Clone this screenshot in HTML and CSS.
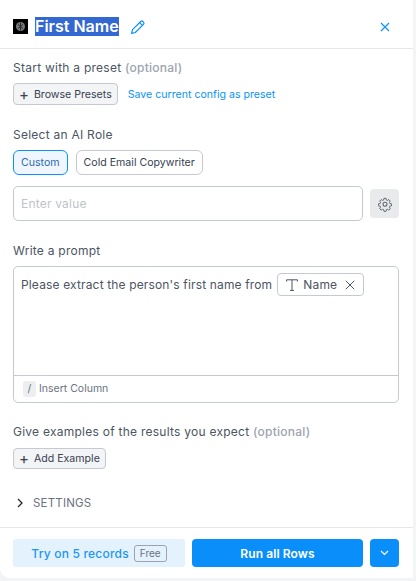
FILE: index.html
```html
<!DOCTYPE html>
<html>
<head>
<meta charset="utf-8">
<title>First Name</title>
<link rel="stylesheet" href="styles.css">
</head>
<body>
<div class="panel">
  <div class="header">
    <svg class="logo" width="15" height="15" viewBox="0 0 15 15"><rect width="15" height="15" fill="#000"/><circle cx="7.5" cy="7.5" r="4.5" fill="#77797c"/><path d="M5 5.5l5 4M5 9.5l5-4M7.5 3.5v8" stroke="#2a2a2a" stroke-width="1"/></svg>
    <span class="title">First Name</span>
    <svg class="pencil" width="16" height="16" viewBox="0 0 16 16" fill="none" stroke="#0b93f6" stroke-width="1.2" stroke-linejoin="round"><path d="M1.6 14.4l.9-3.7 8.2-8.2a1.5 1.5 0 0 1 2.1 0l.7.7a1.5 1.5 0 0 1 0 2.1l-8.2 8.2z"/><path d="M9.6 3.6l2.8 2.8"/></svg>
    <svg class="close" width="10" height="10" viewBox="0 0 10 10" fill="none" stroke="#0b93f6" stroke-width="1.2"><path d="M1 1l8 8M9 1l-8 8"/></svg>
  </div>

  <div class="body">
    <div class="label">Start with a preset <span class="muted">(optional)</span></div>
    <div class="row preset-row">
      <button class="btn"><span class="plus">+</span>Browse Presets</button>
      <a class="link">Save current config as preset</a>
    </div>

    <div class="label role-label">Select an AI Role</div>
    <div class="row role-row">
      <span class="chip chip-on">Custom</span>
      <span class="chip">Cold Email Copywriter</span>
    </div>
    <div class="row value-row">
      <div class="input">Enter value</div>
      <div class="gear">
        <svg width="16" height="16" viewBox="0 0 24 24" fill="none" stroke="#5f6470" stroke-width="1.6" stroke-linejoin="round"><path d="M10.3 2.6h3.4l.6 2.8 1.7.7 2.4-1.5 2.4 2.4-1.5 2.4.7 1.7 2.8.6v3.4l-2.8.6-.7 1.7 1.5 2.4-2.4 2.4-2.4-1.5-1.7.7-.6 2.8h-3.4l-.6-2.8-1.7-.7-2.4 1.5-2.4-2.4 1.5-2.4-.7-1.7-2.8-.6v-3.4l2.8-.6.7-1.7-1.5-2.4 2.4-2.4 2.4 1.5 1.7-.7z" transform="translate(1.2 1.2) scale(.9)"/><circle cx="12" cy="12.5" r="3"/></svg>
      </div>
    </div>

    <div class="label prompt-label">Write a prompt</div>
    <div class="prompt">
      <div class="prompt-text">
        <span>Please extract the person's first name from</span>
        <span class="tag">
          <svg width="12" height="12" viewBox="0 0 12 12" fill="none" stroke="#4b5563" stroke-width="1"><path d="M.6 2.5V.8h10.8v1.7M6 .8v10.6M4 11.4h4"/></svg>
          <span class="tag-name">Name</span>
          <svg width="10" height="10" viewBox="0 0 10 10" fill="none" stroke="#4b5563" stroke-width="1"><path d="M.8.8l8.4 8.4M9.2.8L.8 9.2"/></svg>
        </span>
      </div>
      <div class="prompt-foot"><span class="key">/</span>Insert Column</div>
    </div>

    <div class="label examples-label">Give examples of the results you expect <span class="muted">(optional)</span></div>
    <button class="btn add-btn"><span class="plus">+</span>Add Example</button>

    <div class="settings">
      <svg width="6" height="10" viewBox="0 0 6 10" fill="none" stroke="#1f2937" stroke-width="1.3"><path d="M1 1l4 4-4 4"/></svg>
      <span>SETTINGS</span>
    </div>
  </div>

  <div class="footer">
    <div class="try"><span>Try on 5 records</span><span class="free">Free</span></div>
    <div class="run">Run all Rows</div>
    <div class="more">
      <svg width="9" height="6" viewBox="0 0 9 6" fill="none" stroke="#fff" stroke-width="1.2"><path d="M1 1l3.5 3.5L8 1"/></svg>
    </div>
  </div>
</div>
</body>
</html>
```

FILE: styles.css
```css
html, body {
  margin: 0;
  height: 100%;
}
body {
  background: #f3f4f6;
  font-family: Inter, "Liberation Sans", sans-serif;
  color: #4b5563;
  overflow: hidden;
}
.panel {
  width: 413px;
  height: 578px;
  background: #fff;
  border-bottom-left-radius: 10px;
  display: flex;
  flex-direction: column;
}
.header {
  height: 49px;
  box-sizing: border-box;
  border-bottom: 1px solid #e5e7eb;
  padding: 5px 23px 0 13px;
  display: flex;
  align-items: center;
}
.logo {
  margin-right: 7px;
}
.title {
  background: #3367d1;
  color: #fff;
  font-size: 16px;
  font-weight: 600;
  line-height: 19px;
}
.pencil {
  margin-left: 11px;
}
.close {
  margin-left: auto;
}
.body {
  flex: 1;
  padding: 0 14px 0 13px;
}
.row {
  display: flex;
  align-items: center;
}
.label {
  font-size: 12px;
  line-height: 16px;
  letter-spacing: .25px;
  margin-top: 11px;
}
.muted {
  color: #9ca3af;
  font-weight: 500;
}
.btn {
  height: 22px;
  box-sizing: border-box;
  padding: 0 5px;
  display: flex;
  align-items: center;
  background: #f3f4f6;
  border: 1px solid #c5c9d3;
  border-radius: 4px;
  font: 10.6px Inter, "Liberation Sans", sans-serif;
  color: #374151;
}
.plus {
  font-size: 15px;
  line-height: 15px;
  margin-right: 5px;
}
.preset-row {
  margin-top: 7px;
}
.link {
  margin-left: 10px;
  font-size: 10.6px;
  color: #0b93f6;
}
.role-label {
  margin-top: 22px;
}
.role-row {
  margin-top: 7px;
  gap: 8px;
}
.chip {
  height: 25px;
  box-sizing: border-box;
  padding: 0 7px;
  display: flex;
  align-items: center;
  border: 1px solid #c5c9d3;
  border-radius: 6px;
  font-size: 10.6px;
  color: #374151;
}
.chip-on {
  background: #eff6ff;
  border-color: #0b93f6;
  color: #2b6cb0;
}
.value-row {
  margin-top: 11px;
  gap: 7px;
}
.input {
  flex: 1;
  height: 35px;
  box-sizing: border-box;
  border: 1px solid #c5c9d3;
  border-radius: 5px;
  padding: 0 7px;
  display: flex;
  align-items: center;
  font-size: 12px;
  letter-spacing: .2px;
  color: #c0c3c9;
}
.gear {
  width: 29px;
  height: 29px;
  background: #e9eaec;
  border-radius: 4px;
  display: flex;
  align-items: center;
  justify-content: center;
}
.prompt-label {
  margin-top: 22px;
}
.prompt {
  margin-top: 7px;
  height: 137px;
  box-sizing: border-box;
  border: 1px solid #c5c9d3;
  border-radius: 5px;
  display: flex;
  flex-direction: column;
}
.prompt-text {
  flex: 1;
  padding: 6px 7px;
  display: flex;
  align-items: flex-start;
  font-size: 12px;
  letter-spacing: .15px;
  color: #4b5563;
}
.prompt-text > span:first-child {
  margin-top: 4px;
}
.tag {
  margin-left: 5px;
  height: 23px;
  box-sizing: border-box;
  padding: 0 8px;
  display: flex;
  align-items: center;
  gap: 5px;
  border: 1px solid #c5c9d3;
  border-radius: 4px;
}
.tag-name {
  margin: 0 3px 1px 0;
}
.prompt-foot {
  height: 27px;
  box-sizing: border-box;
  border-top: 1px solid #c5c9d3;
  padding: 0 9px 1px;
  display: flex;
  align-items: center;
  font-size: 10.5px;
  color: #6b7280;
}
.key {
  width: 13px;
  height: 16px;
  margin-right: 3px;
  background: #eceef0;
  border-radius: 3px;
  text-align: center;
  line-height: 16px;
}
.examples-label {
  margin-top: 21px;
}
.add-btn {
  height: 21px;
  margin-top: 8px;
}
.settings {
  margin-top: 27px;
  padding-left: 4px;
  display: flex;
  align-items: center;
  gap: 10px;
  font-size: 11.5px;
  letter-spacing: .2px;
  color: #6b7280;
}
.footer {
  height: 51px;
  box-sizing: border-box;
  border-top: 1px solid #e5e7eb;
  padding: 11px 14px 11px 13px;
  display: flex;
  gap: 7px;
}
.try {
  width: 172px;
  background: #e3f2fd;
  border-radius: 3px;
  display: flex;
  align-items: center;
  justify-content: center;
  gap: 5px;
  font-size: 12px;
  font-weight: 500;
  letter-spacing: .2px;
  color: #2196f3;
}
.free {
  height: 15px;
  padding: 0 5px;
  border: 1px solid #9ca3af;
  border-radius: 3px;
  font-size: 10px;
  font-weight: 400;
  line-height: 15px;
  letter-spacing: 0;
  color: #6b7280;
}
.run {
  flex: 1;
  background: #0a8ffa;
  border-radius: 4px;
  display: flex;
  align-items: center;
  justify-content: center;
  font-size: 12px;
  font-weight: 600;
  letter-spacing: .1px;
  color: #fff;
}
.more {
  width: 29px;
  background: #0a8ffa;
  border-radius: 4px;
  display: flex;
  align-items: center;
  justify-content: center;
}
```
